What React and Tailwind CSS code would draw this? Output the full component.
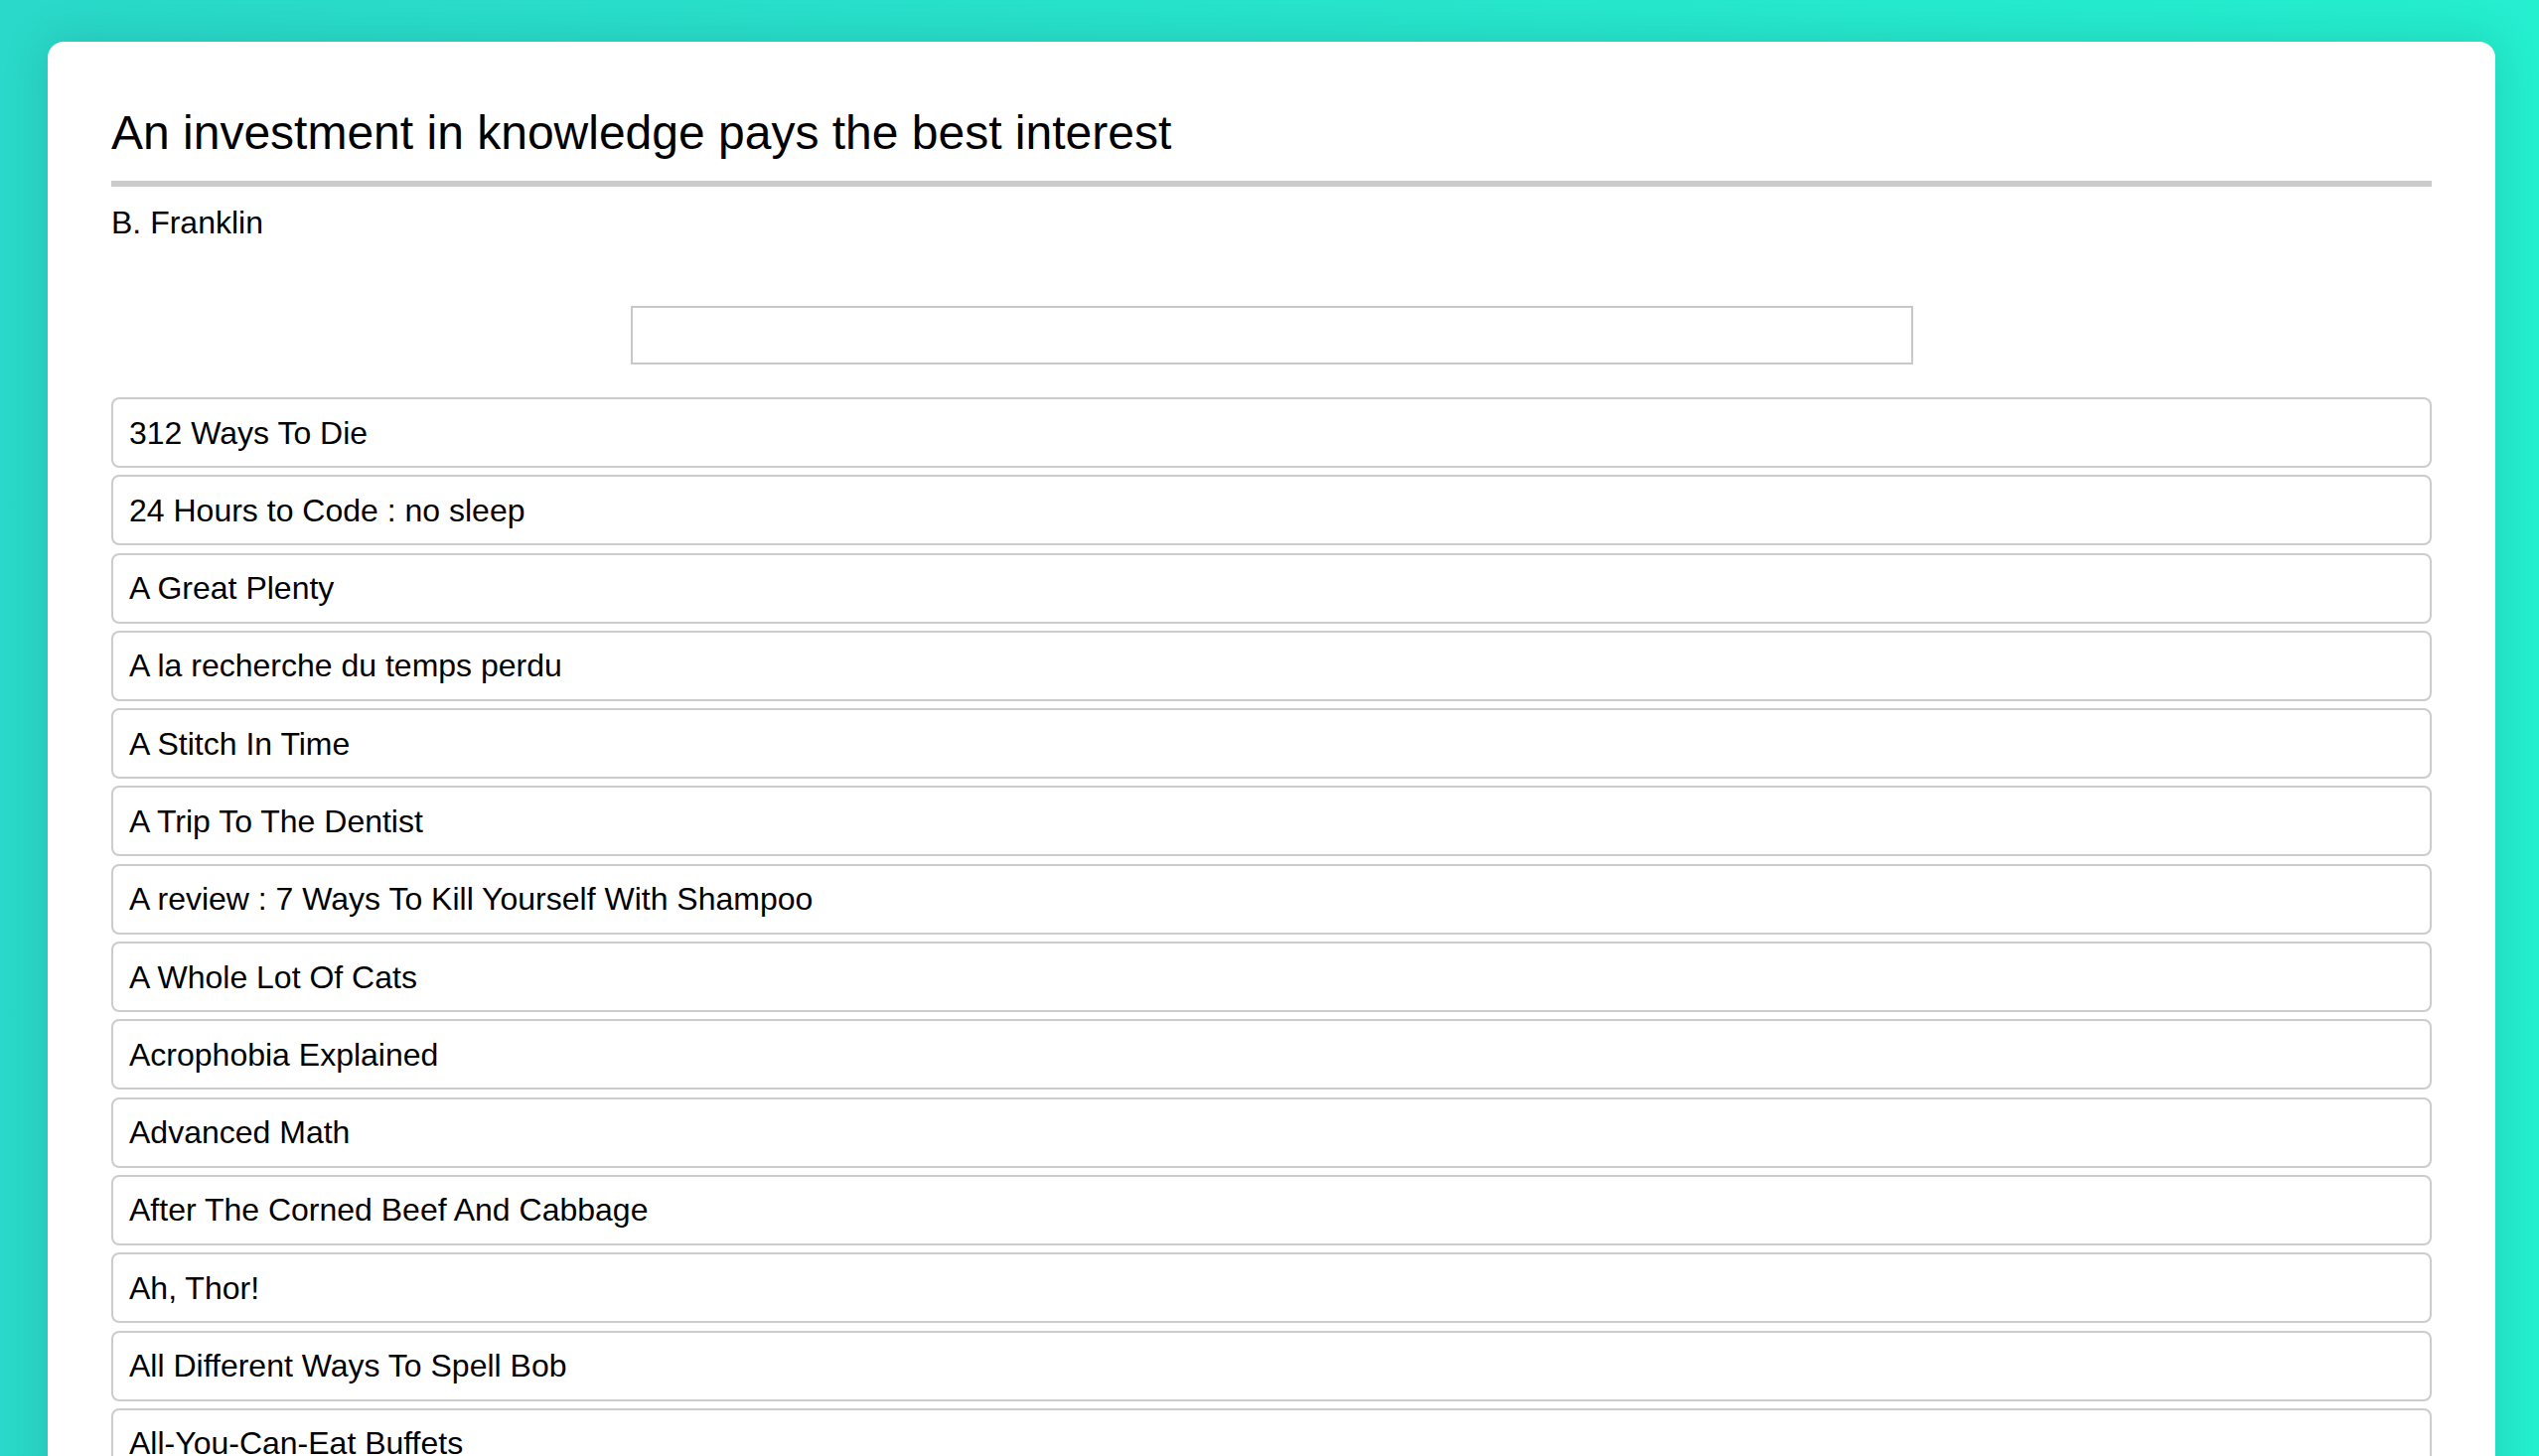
import React, { useState } from "react";

const books = [
  "312 Ways To Die",
  "24 Hours to Code : no sleep",
  "A Great Plenty",
  "A la recherche du temps perdu",
  "A Stitch In Time",
  "A Trip To The Dentist",
  "A review : 7 Ways To Kill Yourself With Shampoo",
  "A Whole Lot Of Cats",
  "Acrophobia Explained",
  "Advanced Math",
  "After The Corned Beef And Cabbage",
  "Ah, Thor!",
  "All Different Ways To Spell Bob",
  "All-You-Can-Eat Buffets",
  "An Apple A Day",
  "Anatomy Of A Sandwich",
];

export default function App() {
  const [query, setQuery] = useState("");

  const filtered = books.filter((b) =>
    b.toLowerCase().includes(query.toLowerCase())
  );

  return (
    <div
      className="min-h-screen bg-gradient-to-r from-[#2ad9c9] to-[#24efcf] pt-[42px] pl-12 pr-[44px] pb-12"
      style={{ fontFamily: '"Liberation Sans", Arial, Helvetica, sans-serif' }}
    >
      <div className="bg-white rounded-[16px] shadow-[0_0_44px_rgba(20,90,90,0.22)] px-16 pt-[64px] pb-16">
        <h1 className="text-[48px] leading-[56px] text-black">
          An investment in knowledge pays the best interest
        </h1>
        <div className="mt-[20px] h-[6px] bg-[#cccccc]" />
        <p className="mt-[18px] text-[32px] leading-[36px] text-black">
          B. Franklin
        </p>

        <div className="mt-[66px] flex justify-center">
          <input
            value={query}
            onChange={(e) => setQuery(e.target.value)}
            className="w-[1291px] h-[59px] border-2 border-[#c8c8c8] px-4 text-[30px] outline-none"
          />
        </div>

        <ul className="mt-[33px] flex flex-col gap-[7.3px]">
          {filtered.map((title) => (
            <li
              key={title}
              className="h-[71px] border-2 border-[#cccccc] rounded-[8px] px-4 flex items-center text-[32px] text-black"
            >
              {title}
            </li>
          ))}
        </ul>
      </div>
    </div>
  );
}
